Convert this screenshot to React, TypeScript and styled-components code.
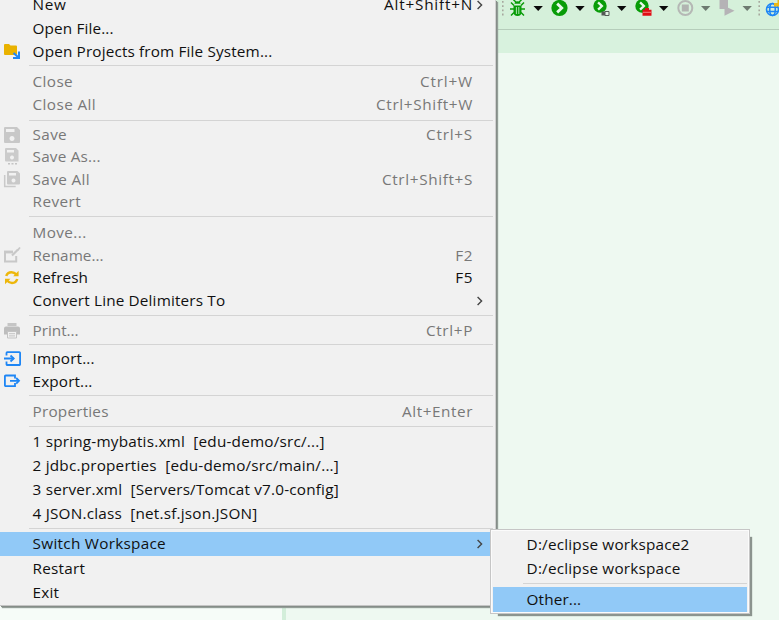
import React from 'react';
import styled, { createGlobalStyle } from 'styled-components';

const GlobalStyle = createGlobalStyle`
  body { margin: 0; background: #fff; overflow: hidden; }
  * { box-sizing: border-box; }
`;

const Screen = styled.div`
  position: relative;
  width: 780px;
  height: 621px;
  overflow: hidden;
  background: #fff;
  font-family: 'Open Sans', 'Noto Sans', sans-serif;
  font-size: 15.3px;
  color: #101010;
`;

const Workbench = styled.div`
  width: 779px;
  height: 620px;
  display: flex;
  flex-direction: column;
  background: #eef9f1;
`;

const Toolbar = styled.div`
  height: 30px;
  flex: none;
  padding-left: 502px;
  overflow: hidden;
  background: #d5f0da;
  border-bottom: 1px solid #b5cdba;
`;

const TabStrip = styled.div`
  height: 23px;
  flex: none;
  background: #d8f2de;
`;

const Panes = styled.div`
  flex: 1;
  display: flex;
`;

const SidePane = styled.div`
  width: 286px;
  background: #f6fcf8;
  border-right: 4px solid #d3eeda;
`;

const MainMenu = styled.div`
  position: absolute;
  left: 0;
  top: 0;
  width: 496px;
  height: 606px;
  padding-right: 2px;
  background: #f1f1f1;
  border-right: 1px solid #d0d0d0;
  border-bottom: 1px solid #c4c4c4;
  box-shadow: 1px 1px 0 #858d88, 2px 2px 1px #949e98;
`;

const MenuList = styled.div`
  margin-top: -7px;
`;

const Submenu = styled.div`
  position: absolute;
  left: 490px;
  top: 529px;
  width: 260px;
  height: 85px;
  padding: 3px 2px 0 2px;
  background: #f1f1f1;
  border: 1px solid #c6c6c6;
  box-shadow: 5px 5px 1px -3px #8b948e;
  &::after {
    content: '';
    position: absolute;
    inset: 0;
    border: 1px solid #fbfbfb;
    pointer-events: none;
  }
`;

const Row = styled.div<{ $h: number; $disabled?: boolean; $active?: boolean }>`
  display: flex;
  align-items: center;
  height: ${(p) => p.$h}px;
  color: ${(p) => (p.$disabled ? '#787878' : '#101010')};
  background: ${(p) => (p.$active ? '#91c9f7' : 'transparent')};
`;

const Gutter = styled.span<{ $w: number }>`
  width: ${(p) => p.$w}px;
  height: 18px;
  padding-left: 3px;
  flex: none;
  svg { display: block; }
`;

const Label = styled.span<{ $ls: number }>`
  flex: 1;
  line-height: 20px;
  padding-bottom: 2px;
  white-space: pre;
  letter-spacing: ${(p) => p.$ls}px;
`;

const Shortcut = styled.span<{ $ls: number }>`
  line-height: 20px;
  padding-bottom: 2px;
  white-space: pre;
  letter-spacing: ${(p) => p.$ls}px;
`;

const Arrow = styled.span`
  width: 20px;
  flex: none;
  display: flex;
  padding-left: 3px;
`;

const Separator = styled.div<{ $h: number; $top: number; $left: number }>`
  height: ${(p) => p.$h}px;
  padding: ${(p) => p.$top}px 0 0 ${(p) => p.$left}px;
  &::before {
    content: '';
    display: block;
    height: 1px;
    background: #d4d4d4;
  }
`;

const Chevron = () => (
  <svg width="8" height="10" viewBox="0 0 8 10" fill="none" stroke="#444" strokeWidth="1.4">
    <path d="M1.6 1 5.6 5 1.6 9" />
  </svg>
);

const icons: Record<string, React.ReactNode> = {
  folder: (
    <svg width="18" height="18">
      <path d="M1 2a1 1 0 0 1 1-1h4l1.500 1.500H13a1 1 0 0 1 1 1V11a1 1 0 0 1-1 1H2a1 1 0 0 1-1-1z" fill="#e9b200" />
      <path d="M10.500 10 15 14M16 8.500V15H10" fill="none" stroke="#1e86f5" strokeWidth="2" />
    </svg>
  ),
  save: (
    <svg width="18" height="18">
      <path fillRule="evenodd" d="M2 1h12l3 3v12a1 1 0 0 1-1 1H2a1 1 0 0 1-1-1V2a1 1 0 0 1 1-1zM3 3v3h8.500V3zM9 10a2.500 2.500 0 1 0 .01 0z" fill="#c8c8c8" />
    </svg>
  ),
  saveAs: (
    <svg width="18" height="18">
      <path fillRule="evenodd" d="M3 0h10l2.500 2.500v11H3a1 1 0 0 1-1-1V1a1 1 0 0 1 1-1zM4 2V4.500h7V2zM9 7.500a2 2 0 1 0 .01 0z" fill="#cbcbcb" />
      <path d="M5 15.700h2M8.500 15.700h2M12 15.700h2" stroke="#c4c4c4" strokeWidth="1.500" />
    </svg>
  ),
  saveAll: (
    <svg width="18" height="18">
      <path fillRule="evenodd" d="M5 0h9.500L17 2.500V12.500a1 1 0 0 1-1 1H5a1 1 0 0 1-1-1V1a1 1 0 0 1 1-1zM6 2V4.500h7V2zM10.500 7.500a2 2 0 1 0 .01 0z" fill="#c9c9c9" />
      <path d="M1.700 4v11.500h11" fill="none" stroke="#c9c9c9" strokeWidth="1.500" />
    </svg>
  ),
  rename: (
    <svg width="18" height="18" fill="none" stroke="#c8c8c8">
      <path d="M10 5H2v9.500h11.200V9" strokeWidth="2" />
      <path d="M1 5h9" strokeWidth="2.800" />
      <path d="M9 8.500 15 2.500" strokeWidth="2.200" />
      <path d="M14.500 3.500 17 .5" strokeWidth="1.800" />
    </svg>
  ),
  refresh: (
    <svg width="18" height="18" fill="none" stroke="#edb70c" strokeWidth="2.500">
      <path d="M3.300 7C4 4.200 6 3.200 8.500 3.200c2 0 3.500.800 5 2.500M14.200 10c-.8 3-2.700 4-5.200 4-2 0-3.500-.800-5-2.500" />
      <path d="M15.600 1.800v5.400h-5.400zM2 15.200v-5.400h5.400z" fill="#edb70c" stroke="none" />
    </svg>
  ),
  print: (
    <svg width="18" height="18">
      <path d="M4.500 1h9v3h-9z" fill="#c5c5c5" />
      <path d="M3 4.500h12a2 2 0 0 1 2 2V12.500H1V6.500a2 2 0 0 1 2-2z" fill="#bdbdbd" />
      <path d="M4.500 9.500h9v6.500h-9z" fill="#f1f1f1" stroke="#c3c3c3" />
      <path d="M6 11.700h6M6 13.900h6" stroke="#c3c3c3" />
    </svg>
  ),
  import: (
    <svg width="18" height="18" fill="none" stroke="#1e86f5" strokeWidth="1.800">
      <path d="M3.500 5.500V3a.8.8 0 0 1 .8-.8h12a.8.8 0 0 1 .8.8v11.200a.8.8 0 0 1-.8.8H4.300a.8.8 0 0 1-.8-.8v-2.700M1 8.500h10" />
      <path d="M7.500 5.500 10.700 8.500 7.500 11.500" />
    </svg>
  ),
  export: (
    <svg width="18" height="18" fill="none" stroke="#1e86f5" strokeWidth="1.800">
      <path d="M12 5.500V2.500H2.700a.8.8 0 0 0-.8.8v9a.8.8 0 0 0 .8.8H12v-3M7 7.800h9" />
      <path d="M13.200 5 16 7.800 13.200 10.600" />
    </svg>
  ),
};

type Item = {
  label: string;
  h: number;
  ls: number;
  keys?: string;
  keysLs?: number;
  icon?: string;
  disabled?: boolean;
  active?: boolean;
  sub?: boolean;
};
type Rule = { rule: number; top: number };

const fileMenu: (Item | Rule)[] = [
  { label: 'New', h: 24, ls: 0.6, keys: 'Alt+Shift+N', keysLs: 0.79, sub: true },
  { label: 'Open File...', h: 24, ls: 0.13 },
  { label: 'Open Projects from File System...', h: 22, ls: 0.15, icon: 'folder' },
  { rule: 7, top: 2 },
  { label: 'Close', h: 23, ls: 0.38, keys: 'Ctrl+W', keysLs: 0.81, disabled: true },
  { label: 'Close All', h: 24, ls: 0.39, keys: 'Ctrl+Shift+W', keysLs: 0.66, disabled: true },
  { rule: 7, top: 3 },
  { label: 'Save', h: 22, ls: 0.33, keys: 'Ctrl+S', keysLs: 0.76, icon: 'save', disabled: true },
  { label: 'Save As...', h: 22, ls: 0.19, icon: 'saveAs', disabled: true },
  { label: 'Save All', h: 23, ls: 0.37, keys: 'Ctrl+Shift+S', keysLs: 0.64, icon: 'saveAll', disabled: true },
  { label: 'Revert', h: 22, ls: 0.42, disabled: true },
  { rule: 9, top: 3 },
  { label: 'Move...', h: 22, ls: 0.39, disabled: true },
  { label: 'Rename...', h: 23, ls: 0.03, keys: 'F2', keysLs: 0.5, icon: 'rename', disabled: true },
  { label: 'Refresh', h: 22, ls: 0.12, keys: 'F5', keysLs: 0.5, icon: 'refresh' },
  { label: 'Convert Line Delimiters To', h: 23, ls: 0.16, sub: true },
  { rule: 7, top: 3 },
  { label: 'Print...', h: 23, ls: -0.03, keys: 'Ctrl+P', keysLs: 0.65, icon: 'print', disabled: true },
  { rule: 6, top: 2 },
  { label: 'Import...', h: 22, ls: 0.14, icon: 'import' },
  { label: 'Export...', h: 23, ls: 0.12, icon: 'export' },
  { rule: 7, top: 2 },
  { label: 'Properties', h: 23, ls: 0.2, keys: 'Alt+Enter', keysLs: 0.56, disabled: true },
  { rule: 7, top: 3 },
  { label: '1 spring-mybatis.xml  [edu-demo/src/...]', h: 24, ls: 0.2 },
  { label: '2 jdbc.properties  [edu-demo/src/main/...]', h: 24, ls: 0.2 },
  { label: '3 server.xml  [Servers/Tomcat v7.0-config]', h: 24, ls: 0.19 },
  { label: '4 JSON.class  [net.sf.json.JSON]', h: 24, ls: 0.2 },
  { rule: 6, top: 2 },
  { label: 'Switch Workspace', h: 24, ls: 0.28, active: true, sub: true },
  { label: 'Restart', h: 25, ls: 0.21 },
  { label: 'Exit', h: 23, ls: 0.17 },
];

const workspaceMenu: (Item | Rule)[] = [
  { label: 'D:/eclipse workspace2', h: 24, ls: 0.2 },
  { label: 'D:/eclipse workspace', h: 24, ls: 0.2 },
  { rule: 6, top: 2 },
  { label: 'Other...', h: 25, ls: 0.12, active: true },
];

const Items = ({ items, gutter, ruleLeft }: { items: (Item | Rule)[]; gutter: number; ruleLeft: number }) => (
  <>
    {items.map((it, i) =>
      'rule' in it ? (
        <Separator key={i} $h={it.rule} $top={it.top} $left={ruleLeft} />
      ) : (
        <Row key={i} $h={it.h} $disabled={it.disabled} $active={it.active}>
          <Gutter $w={gutter}>{it.icon && icons[it.icon]}</Gutter>
          <Label $ls={it.ls}>{it.label}</Label>
          {it.keys && <Shortcut $ls={it.keysLs ?? 0.6}>{it.keys}</Shortcut>}
          <Arrow>{it.sub && <Chevron />}</Arrow>
        </Row>
      ),
    )}
  </>
);

const Caret = ({ x, dim }: { x: number; dim?: boolean }) => (
  <path d={`M${x} 6h9.400l-4.700 5z`} fill={dim ? '#6d7a70' : '#0a0a0a'} />
);

const RunArrow = ({ x, y, r }: { x: number; y: number; r: number }) => (
  <g transform={`translate(${x} ${y}) scale(${r / 8})`}>
    <circle r="8" fill="#089c08" />
    <path d="M-2.300-4.300 2.200 0-2.300 4.300" fill="none" stroke="#e8f8ea" strokeWidth="2.800" />
  </g>
);

const ToolbarIcons = () => (
  <svg width="277" height="29" viewBox="502 0 277 29">
    <path d="M502.800 1v16M759.200 1v16" stroke="#a5a49b" strokeWidth="1.500" strokeDasharray="1.800 2.400" />
    <g fill="none" stroke="#089c08" strokeWidth="1.500">
      <path d="M511 2.500 514 5.500M524 2.500 521 5.500M510 9h15M511 15.500 514 12.500M524 15.500 521 12.500M513.500 0 516 2M521.500 0 519 2" />
      <path d="M513.500 5.500h8V12a4 4 0 0 1-8 0z" fill="#089c08" stroke="none" />
      <path d="M514.500 3.800a3 2.600 0 0 1 6 0z" fill="#089c08" stroke="none" />
      <path d="M516.400 7v7M518.800 7v7" stroke="#bfe8c4" strokeWidth=".9" />
    </g>
    <Caret x={533.500} />
    <RunArrow x={559.500} y={8} r={8.100} />
    <Caret x={575.300} />
    <RunArrow x={600} y={6} r={6.700} />
    <path d="M601.500 11.500h7v4h-7z" fill="#555b56" />
    <path d="M605 11.500h4v4h-4z" fill="#e4f4e6" stroke="#555b56" />
    <Caret x={617} />
    <RunArrow x={642} y={6} r={6.700} />
    <path d="M642.500 9.800h9v6h-9zM645 8h4v2h-4z" fill="#e00d14" />
    <path d="M643 12.300h8" stroke="#f58a8a" strokeWidth=".9" />
    <Caret x={659} />
    <circle cx="685.300" cy="8" r="7" fill="none" stroke="#b5b8b5" strokeWidth="2" />
    <path d="M681.800 4.500h7v7h-7z" fill="#b1b4b1" />
    <Caret x={701} dim />
    <path d="M719.500 0h8.500v9h-8.500zM724.500 6l10 4.800-10 5z" fill="#b5b3b6" />
    <Caret x={742.500} dim />
    <g fill="none" stroke="#1e86f5" strokeWidth="1.600">
      <circle cx="772.500" cy="9.500" r="6" />
      <ellipse cx="772.500" cy="9.500" rx="2.800" ry="6" />
      <path d="M767 7.300h11M767 11.500h11" />
    </g>
    <path d="M777.500 0v3H774v3.500h5V0z" fill="#edb913" />
  </svg>
);

export default function App() {
  return (
    <>
      <GlobalStyle />
      <Screen>
        <Workbench>
          <Toolbar>
            <ToolbarIcons />
          </Toolbar>
          <TabStrip />
          <Panes>
            <SidePane />
          </Panes>
        </Workbench>
        <MainMenu>
          <MenuList>
            <Items items={fileMenu} gutter={32.6} ruleLeft={29} />
          </MenuList>
        </MainMenu>
        <Submenu>
          <Items items={workspaceMenu} gutter={33.6} ruleLeft={30} />
        </Submenu>
      </Screen>
    </>
  );
}
